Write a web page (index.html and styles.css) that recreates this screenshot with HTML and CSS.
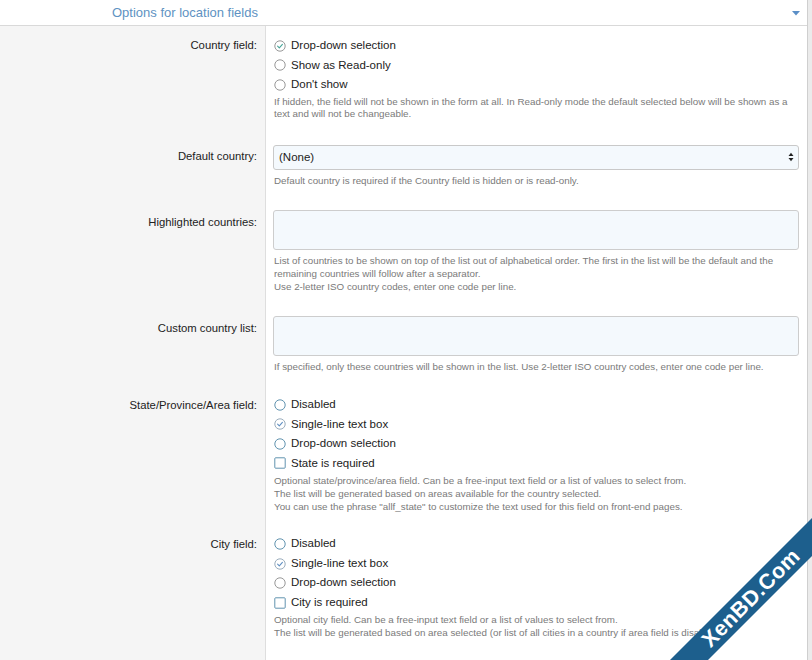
FILE: index.html
```html
<!DOCTYPE html>
<html>
<head>
<meta charset="utf-8">
<title>Options for location fields</title>
<link rel="stylesheet" href="styles.css">
</head>
<body>
<div class="page">
  <div class="header">
    <h3 class="title">Options for location fields</h3>
    <svg class="toggle" width="8" height="5" viewBox="0 0 8 5"><path d="M0 0H8L4 4.5Z" fill="#5b8fc7"/></svg>
  </div>
  <div class="form">
    <div class="label">Country field:</div>
    <div class="field">
      <ul class="options options-first">
        <li class="option"><svg class="icon" viewBox="0 0 12 12"><circle cx="6" cy="6" r="5.2" class="ring-gray"/><path d="M3.6 6.2L5.3 7.8L8.4 4.3" class="check-teal"/></svg>Drop-down selection</li>
        <li class="option"><svg class="icon" viewBox="0 0 12 12"><circle cx="6" cy="6" r="5.2" class="ring-gray"/></svg>Show as Read-only</li>
        <li class="option"><svg class="icon" viewBox="0 0 12 12"><circle cx="6" cy="6" r="5.2" class="ring-gray"/></svg>Don't show</li>
      </ul>
      <p class="hint">If hidden, the field will not be shown in the form at all. In Read-only mode the default selected below will be shown as a<br>text and will not be changeable.</p>
    </div>

    <div class="label label-input">Default country:</div>
    <div class="field">
      <div class="select"><span>(None)</span><svg class="arrows" width="6" height="10" viewBox="0 0 6 10"><path d="M0.5 4H5.5L3 0.8Z M0.5 6H5.5L3 9.2Z" fill="#222"/></svg></div>
      <p class="hint hint-input">Default country is required if the Country field is hidden or is read-only.</p>
    </div>

    <div class="label label-input">Highlighted countries:</div>
    <div class="field">
      <div class="textarea"></div>
      <p class="hint hint-input">List of countries to be shown on top of the list out of alphabetical order. The first in the list will be the default and the<br>remaining countries will follow after a separator.<br>Use 2-letter ISO country codes, enter one code per line.</p>
    </div>

    <div class="label label-input">Custom country list:</div>
    <div class="field">
      <div class="textarea"></div>
      <p class="hint hint-input">If specified, only these countries will be shown in the list. Use 2-letter ISO country codes, enter one code per line.</p>
    </div>

    <div class="label">State/Province/Area field:</div>
    <div class="field">
      <ul class="options">
        <li class="option"><svg class="icon" viewBox="0 0 12 12"><circle cx="6" cy="6" r="5.2" class="ring-blue"/></svg>Disabled</li>
        <li class="option"><svg class="icon" viewBox="0 0 12 12"><circle cx="6" cy="6" r="5.2" class="ring-soft"/><path d="M3.6 6.2L5.3 7.8L8.4 4.3" class="check-blue"/></svg>Single-line text box</li>
        <li class="option"><svg class="icon" viewBox="0 0 12 12"><circle cx="6" cy="6" r="5.2" class="ring-blue"/></svg>Drop-down selection</li>
        <li class="option"><svg class="icon" viewBox="0 0 12 12"><rect x="0.8" y="0.8" width="10.4" height="10.4" rx="0.8" class="ring-blue"/></svg>State is required</li>
      </ul>
      <p class="hint">Optional state/province/area field. Can be a free-input text field or a list of values to select from.<br>The list will be generated based on areas available for the country selected.<br>You can use the phrase "allf_state" to customize the text used for this field on front-end pages.</p>
    </div>

    <div class="label last">City field:</div>
    <div class="field last">
      <ul class="options">
        <li class="option"><svg class="icon" viewBox="0 0 12 12"><circle cx="6" cy="6" r="5.2" class="ring-blue"/></svg>Disabled</li>
        <li class="option"><svg class="icon" viewBox="0 0 12 12"><circle cx="6" cy="6" r="5.2" class="ring-soft"/><path d="M3.6 6.2L5.3 7.8L8.4 4.3" class="check-blue"/></svg>Single-line text box</li>
        <li class="option"><svg class="icon" viewBox="0 0 12 12"><circle cx="6" cy="6" r="5.2" class="ring-gray"/></svg>Drop-down selection</li>
        <li class="option"><svg class="icon" viewBox="0 0 12 12"><rect x="0.8" y="0.8" width="10.4" height="10.4" rx="0.8" class="ring-blue"/></svg>City is required</li>
      </ul>
      <p class="hint">Optional city field. Can be a free-input text field or a list of values to select from.<br>The list will be generated based on area selected (or list of all cities in a country if area field is disabled).</p>
    </div>
  </div>
</div>
<svg class="watermark" width="172" height="160" viewBox="0 0 172 160">
  <polygon points="30,160 172,18 172,56 68,160" fill="#1d5f8d"/>
  <text x="111" y="98" transform="rotate(-45 111 98)" text-anchor="middle" dominant-baseline="central" class="wm-text">XenBD.Com</text>
</svg>
</body>
</html>
```

FILE: styles.css
```css
html, body {
  margin: 0;
  padding: 0;
  height: 100%;
}
body {
  background: #ebebeb;
  font-family: "Liberation Sans", Arial, sans-serif;
  color: #222;
  overflow: hidden;
  position: relative;
}
.page {
  width: 807px;
  height: 100%;
  border-right: 1px solid #cfcfcf;
  background: #fff;
  display: flex;
  flex-direction: column;
  overflow: hidden;
}
.header {
  height: 25px;
  flex: none;
  border-bottom: 1px solid #d9d9d9;
  display: flex;
  align-items: center;
  justify-content: space-between;
  padding: 0 7px 0 112px;
}
.title {
  margin: 0;
  font-weight: normal;
  font-size: 13px;
  color: #5e92c2;
}
.toggle {
  display: block;
  margin-top: 1px;
}
.form {
  flex: 1;
  display: grid;
  grid-template-columns: 266px 1fr;
  grid-template-rows: repeat(5, auto) 1fr;
}
.label {
  background: #f5f5f5;
  border-right: 1px solid #dedede;
  text-align: right;
  padding: 9.5px 8px 12px 0;
  font-size: 11.3px;
  line-height: 19.5px;
}
.label-input {
  padding-top: 13.5px;
}
.field {
  padding: 10px 8px 12px 7px;
  min-width: 0;
}
.options {
  list-style: none;
  margin: -1px 0 0;
  padding: 0;
}
.options-first {
  margin-top: 0;
}
.option {
  display: flex;
  align-items: center;
  font-size: 11.5px;
  line-height: 19.5px;
  height: 19.5px;
  white-space: nowrap;
}
.icon {
  width: 12px;
  height: 12px;
  flex: none;
  margin: 0 5px 0 1px;
  fill: none;
}
.ring-gray { stroke: #8c8c8c; stroke-width: 0.9; fill: #fff; }
.ring-blue { stroke: #4f87a6; stroke-width: 0.9; fill: #fff; }
.ring-soft { stroke: #8ea4b6; stroke-width: 0.9; fill: #fff; }
.check-teal { stroke: #45a397; stroke-width: 1.1; fill: none; stroke-linecap: round; stroke-linejoin: round; }
.check-blue { stroke: #5f8fc2; stroke-width: 1.1; fill: none; stroke-linecap: round; stroke-linejoin: round; }
.hint {
  margin: 2px 0 0 1px;
  font-size: 9.8px;
  line-height: 12.8px;
  color: #7a7a7a;
  white-space: nowrap;
}
.options-first + .hint {
  margin-top: 1px;
}
.hint-input {
  margin-top: 5.5px;
}
.select {
  margin-top: 1.5px;
  height: 23px;
  border: 1px solid #c9c9c9;
  border-radius: 3px;
  background: #f4f9fd;
  display: flex;
  align-items: center;
  justify-content: space-between;
  padding: 0 4px 0 5px;
  font-size: 11.5px;
}
.arrows {
  display: block;
}
.textarea {
  height: 38px;
  border: 1px solid #cdcdcd;
  border-radius: 3px;
  background: #f4f9fd;
}
.watermark {
  position: absolute;
  left: 640px;
  top: 500px;
  display: block;
}
.wm-text {
  fill: #fff;
  font-family: "Liberation Sans", Arial, sans-serif;
  font-weight: bold;
  font-size: 21.5px;
  letter-spacing: 0.5px;
}
```
